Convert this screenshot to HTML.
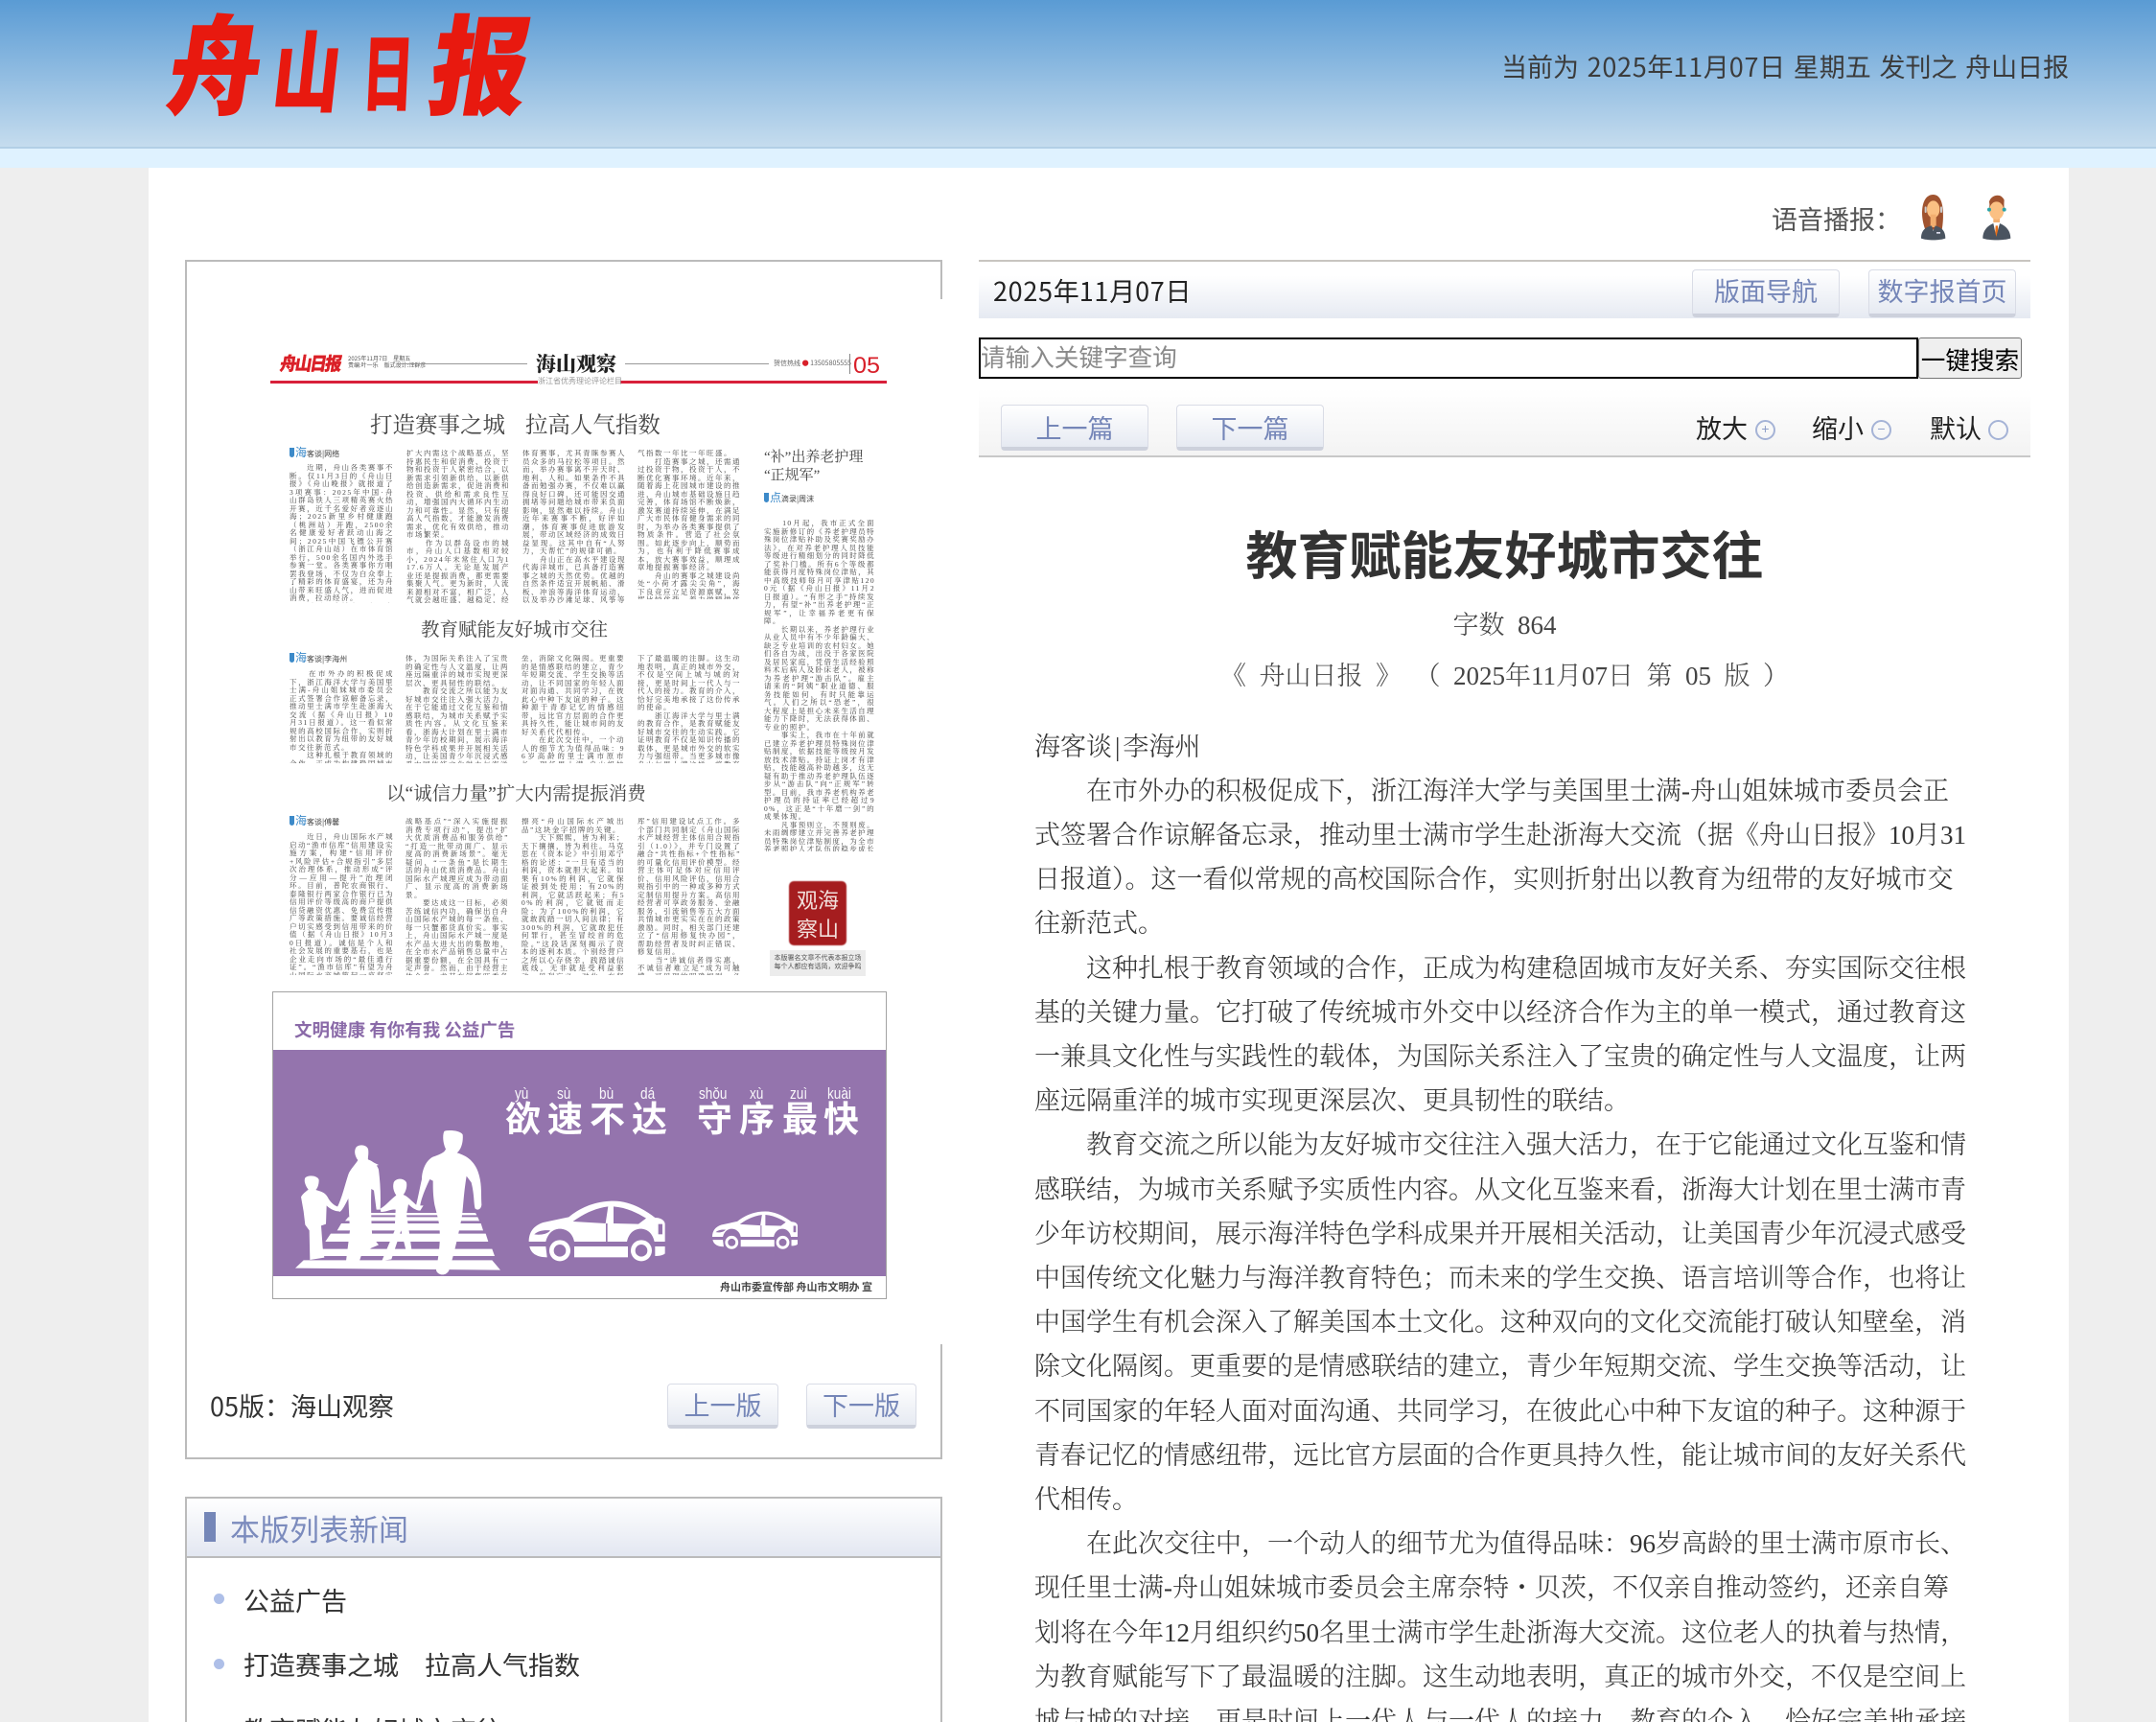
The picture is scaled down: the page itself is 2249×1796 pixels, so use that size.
<!DOCTYPE html>
<html lang="zh-CN"><head><meta charset="utf-8"><title>舟山日报</title>
<style>
html,body{margin:0;padding:0;width:2249px;height:1796px;overflow:hidden;background:#eee}
body{position:relative;font-family:"WenQuanYi Zen Hei","Noto Sans CJK SC",sans-serif;color:#333}
.a{position:absolute;white-space:nowrap}
.t{position:absolute;white-space:nowrap;font-size:27px;line-height:40px}
.d{letter-spacing:.7px}
.btn{position:absolute;box-sizing:border-box;background:linear-gradient(#fff,#e6eaf2);border:1px solid #d9dce6;border-bottom:4px solid #cdd1dc;border-radius:4px;color:#7586b8;font-size:27px;text-align:center}
.lg{position:absolute;color:#e8190f;font-family:"Noto Sans CJK SC",sans-serif;font-weight:900;line-height:1;transform-origin:0 0;-webkit-text-stroke:1px #e8190f}
.cir{position:absolute;box-sizing:border-box;width:21px;height:21px;border-radius:50%;border:2.5px solid #a5b3d6;color:#8f9fc8;font-size:14px;line-height:15px;text-align:center;font-family:"Liberation Sans",sans-serif}
.art{position:absolute;left:1079px;top:755.5px;font-family:"Liberation Serif","Noto Serif CJK SC",serif;font-weight:300;font-size:27px;line-height:46.2px;color:#333;white-space:nowrap}
.np{position:absolute;font-family:"Liberation Serif","Noto Serif CJK SC",serif;font-size:7.5px;line-height:8.5px;letter-spacing:1.5px;color:#444;overflow:hidden;text-align:justify;word-break:break-all;filter:blur(.3px)}
.nh{position:absolute;white-space:nowrap;font-family:"Liberation Serif","Noto Serif CJK SC",serif;color:#444;filter:blur(.3px)}
.by{position:absolute;font-size:8px;line-height:11px;color:#444;white-space:nowrap;filter:blur(.3px)}
.by b{color:#3c8ac9;font-size:12px;font-weight:400}
.by i{display:inline-block;width:5px;height:10px;background:#3c8ac9;border-radius:0 0 3px 3px;margin-right:1px;vertical-align:-1px}
.py{position:absolute;top:1132px;color:#fff;font:17px/18px "Liberation Sans",sans-serif;white-space:nowrap;transform:scaleX(.8);transform-origin:0 0;opacity:.95}
.ad{position:absolute;top:1142px;color:#fff;font-family:"WenQuanYi Zen Hei","Noto Sans CJK SC",sans-serif;font-weight:bold;font-size:37px;line-height:44px}
</style></head><body>

<div class="a" style="left:0;top:0;width:2249px;height:153px;background:linear-gradient(#5a9bd4,#c5dcee)"></div>
<div class="a" style="left:0;top:153px;width:2249px;height:2px;background:#b2cfe6"></div>
<div class="a" style="left:0;top:155px;width:2249px;height:20px;background:#dff2ff"></div>
<div class="a" style="left:155px;top:175px;width:2003px;height:1621px;background:#fff"></div>

<!-- logo -->
<span class="lg" style="left:187px;top:6px;font-size:112px;transform:scale(.86,1) skewX(-10deg)">舟</span>
<span class="lg" style="left:291px;top:25px;font-size:92px;transform:scale(.76,.98) skewX(-8deg)">山</span>
<span class="lg" style="left:380px;top:28px;font-size:90px;transform:scale(.6,.95) skewX(-4deg)">日</span>
<span class="lg" style="left:461px;top:6px;font-size:112px;transform:scale(.9,1) skewX(-10deg)">报</span>

<div class="t" style="left:1566px;top:49px;width:592px;color:#3b3b3b;word-spacing:2.6px">当前为 <span class="d">2025</span>年<span class="d">11</span>月<span class="d">07</span>日 星期五 发刊之 舟山日报</div>

<!-- voice -->
<div class="t" style="left:1848px;top:208px;color:#555">语音播报：</div>
<svg class="a" style="left:2000px;top:200px" width="100" height="54" viewBox="120 60 300 160">
<path d="M170 68C145 68 135 95 135 125C135 145 140 165 145 178L197 178C200 160 202 140 200 115C198 90 190 68 170 68Z" fill="#a0532f"/>
<ellipse cx="170" cy="114" rx="20" ry="27" fill="#fbc083"/><rect x="161" y="130" width="18" height="40" fill="#f2ae70"/>
<rect x="143" y="105" width="6" height="20" rx="3" fill="#ccc"/><rect x="192" y="105" width="6" height="20" rx="3" fill="#ccc"/>
<path d="M132 205C132 180 145 170 165 165L170 182L176 165C195 170 208 180 208 205C190 212 150 212 132 205Z" fill="#4a5460"/><rect x="180" y="185" width="12" height="5" fill="#dde"/>
<path d="M347 92C345 70 385 60 390 85L392 112L345 112Z" fill="#a0532f"/>
<rect x="358" y="135" width="20" height="30" fill="#f2ae70"/>
<ellipse cx="368" cy="118" rx="23" ry="28" fill="#fbc083"/><path d="M347 105C350 85 385 80 391 105L392 85C385 66 350 70 345 90Z" fill="#a0532f"/>
<circle cx="345" cy="115" r="6" fill="#2aa3a8"/><circle cx="392" cy="115" r="6" fill="#2aa3a8"/>
<path d="M358 155L378 155L385 200L352 200Z" fill="#fff"/><path d="M365 165L372 165L374 198L368 205L363 198Z" fill="#e8701a"/>
<path d="M325 205C325 180 340 165 358 158L367 200L378 158C396 165 412 180 412 205C390 212 345 212 325 205Z" fill="#4a5460"/>
</svg>

<!-- left box -->
<div class="a" style="left:193px;top:271px;width:789px;height:2px;background:#bbb"></div>
<div class="a" style="left:193px;top:271px;width:2px;height:1251px;background:#bbb"></div>
<div class="a" style="left:981px;top:271px;width:2px;height:41px;background:#bbb"></div>
<div class="a" style="left:981px;top:1402px;width:2px;height:120px;background:#bbb"></div>
<div class="a" style="left:193px;top:1520px;width:790px;height:2px;background:#bbb"></div>

<!-- newspaper masthead -->
<span class="lg" style="left:294px;top:369px;font-size:19px;letter-spacing:-2px;-webkit-text-stroke:.3px #e8190f;transform:scale(.92,1) skewX(-10deg);font-weight:900;white-space:nowrap;color:#d8202a">舟山日报</span>
<div class="a" style="left:363px;top:370px;font-size:6px;line-height:7px;color:#555;filter:blur(.3px)">2025年11月7日　星期五<br>责编:叶一乐　版式设计:汪群彦</div>
<div class="a" style="left:414px;top:379px;width:136px;height:1px;background:#999"></div>
<div class="a" style="left:652px;top:379px;width:150px;height:1px;background:#999"></div>
<div class="a" style="left:559px;top:365px;font:900 21px/28px 'Noto Serif CJK SC',serif;color:#222;filter:blur(.3px)">海山观察</div>
<div class="a" style="left:807px;top:375px;font-size:7px;line-height:9px;color:#666;filter:blur(.3px)">贺信热线 <span style="color:#d8202a">●</span> 13505805555</div>
<div class="a" style="left:886px;top:369px;width:1px;height:21px;background:#888"></div>
<div class="a" style="left:890px;top:367px;font:24px/30px 'Liberation Sans',sans-serif;color:#d8202a;transform:scaleX(1.05);transform-origin:0 0">05</div>
<div class="a" style="left:282px;top:397px;width:643px;height:3px;background:#d8203a"></div>
<div class="a" style="left:561px;top:392px;width:86px;height:12px;background:#fff;text-align:center;font-size:8px;line-height:12px;color:#999">浙江省优秀理论评论栏目</div>

<!-- newspaper headings -->
<div class="nh" style="left:386px;top:427px;font-size:23.5px;line-height:34px;word-spacing:15px">打造赛事之城 拉高人气指数</div>
<div class="nh" style="left:439px;top:644px;font-size:19.5px;line-height:28px">教育赋能友好城市交往</div>
<div class="nh" style="left:403px;top:815px;font-size:19.5px;line-height:28px">以“诚信力量”扩大内需提振消费</div>
<div class="nh" style="left:797px;top:468px;font-size:15px;line-height:19px">“补”出养老护理<br>“正规军”</div>

<div class="by" style="left:302px;top:466px"><i></i><b>海</b>客谈|网络</div>
<div class="by" style="left:302px;top:680px"><i></i><b>海</b>客谈|李海州</div>
<div class="by" style="left:302px;top:850px"><i></i><b>海</b>客谈|傅馨</div>
<div class="by" style="left:797px;top:513px"><i></i><b>点</b>滴录|周沫</div>

<div class="np" style="left:302px;top:484px;width:109px;height:145px">　　近期，舟山各类赛事不断。仅11月3日的《舟山日报》《舟山晚报》就报道了3项赛事：2025年中国·舟山群岛铁人三项精英赛火热开赛，近千名爱好者竞逐山海；2025新里乡村健康跑（桃洲站）开跑，2500余名健康爱好者跃动山海之间；2025中国飞镖公开赛（浙江舟山站）在市体育馆举行，500余名国内外选手参赛一堂。各类赛事你方唱罢我登场，不仅为白众奉上了精彩的体育盛宴，还为舟山带来旺盛人气，进而促进消费，拉动经济。<br>　　对于一座城市而言，人气指数往往反映其经济繁荣程度。产业兴，人气才能聚集；人气旺，消费才会活跃。党的二十届四中全会指出，提大国内市场是中国式现代化的战略抉择。坚持</div>
<div class="np" style="left:424px;top:469px;width:108px;height:160px">扩大内需这个战略基点，坚持惠民生和促消费、投资于物和投资于人紧密结合，以新需求引领新供给，以新供给创造新需求，促进消费和投资、供给和需求良性互动，增强国内大循环内生动力和可靠性。显然，只有提高人气指数，才能激发消费需求，优化有效供给，推动市场繁荣。<br>　　作为以群岛设市的城市，舟山人口基数相对较小，2024年末常住人口为117.6万人。无论是发展产业还是提振消费，都更需要集聚人气。更为新时，人流来源相对不富，相广泛，人气就会越旺盛，越稳定，经济发展也越有韧性。打造赛事之城，正是提高人气指数的有效途径。每场赛事都能带来不同程度的人流。赛事接连不断也能形成稳定流量，从而持续支撑消费持续升温。<br>　　正因如此，许多城市都积极举办</div>
<div class="np" style="left:545px;top:469px;width:108px;height:160px">体育赛事，尤其青睐参赛人员众多的马拉松等项目。然而，举办赛事离不开天时、地利、人和。如果条件不具备而勉强办赛，不仅难以赢得良好口碑，还可能因交通拥堵等问题给城市带来负面影响，显然难以持续。舟山近年来赛事不断，好评如潮，体育赛事促进旅游发展，带动区域经济的成效日益显现。这其中自有“人努力，天帮忙”的规律可循。<br>　　舟山正在高水平建设现代海洋城市，已具备打造赛事之城的天然优势。优越的自然条件适宜开展帆船、滑板、冲浪等海洋体育运动，以及举办沙滩足球、风筝等赛事，即便是马拉松、骑行等常规体育项目，也因滨海而颇具魅力。优美的滨海环境，精致的海岛风情，对参赛选手具有独特的吸引力。正因如此，海岛马拉松等品牌赛事的人</div>
<div class="np" style="left:665px;top:469px;width:108px;height:156px">气指数一年比一年旺盛。<br>　　打造赛事之城，还需通过投资于物，投资于人，不断优化赛事环境。近年来，随着海上花园城市建设的推进，舟山城市基础设施日趋完善，体育场馆不断焕新，激发赛道持续延伸，在满足广大市民体育健身需求的同时，为举办各类赛事提供了物质条件。营造了社会氛围。如此逐步向上，顺势而为，也有利于降低赛事成本，放大赛事效益，顺理成章地提振赛事经济。<br>　　舟山的赛事之城建设尚处“小荷才露尖尖角”，海下良竞应立足资源禀赋，发挥比较优势，着力做精做优海岛品牌赛事，推动群众体育与竞技体育良性互动，体育赛事与区域经济深度融合，开辟消费新场景，拓长体育产业链，使赛事汇聚的人气更好地转化为消费力、生产力。</div>

<div class="np" style="left:302px;top:699px;width:109px;height:97px">　　在市外办的积极促成下，浙江海洋大学与美国里士满-舟山姐妹城市委员会正式签署合作谅解备忘录，推动里士满市学生赴浙海大交流（据《舟山日报》10月31日报道）。这一看似常规的高校国际合作，实则折射出以教育为纽带的友好城市交往新范式。<br>　　这种扎根于教育领域的合作，正成为构建稳固城市友好关系、夯实国际交往根基的关键力量。它打破了传统城市外交中以经济合作为主的单一模式，通过教育这一兼具文化性与实践性的载</div>
<div class="np" style="left:423px;top:683px;width:108px;height:113px">体，为国际关系注入了宝贵的确定性与人文温度，让两座远隔重洋的城市实现更深层次、更具韧性的联结。<br>　　教育交流之所以能为友好城市交往注入强大活力，在于它能通过文化互鉴和情感联结，为城市关系赋予实质性内容。从文化互鉴来看，浙海大计划在里士满市青少年访校期间，展示海洋特色学科成果并开展相关活动，让美国青少年沉浸式感受中国传统文化魅力与海洋教育特色；而未来的学生交换、语言培训等合作，也将让中国学生有机会深入了解美国本土文化。这种双向的文化交流能打破认知壁</div>
<div class="np" style="left:544px;top:683px;width:108px;height:113px">垒，消除文化隔阂。更重要的是情感联结的建立，青少年短期交流、学生交换等活动，让不同国家的年轻人面对面沟通、共同学习，在彼此心中种下友谊的种子。这种源于青春记忆的情感纽带，远比官方层面的合作更具持久性，能让城市间的友好关系代代相传。<br>　　在此次交往中，一个动人的细节尤为值得品味：96岁高龄的里士满市原市长、现任里士满-舟山姐妹城市委员会主席奈特·贝茨，不仅亲自推动签约，还亲自筹划将在今年12月组织约50名里士满市学生赴浙海大交流。这位老人的执着与热情，为教育赋能写</div>
<div class="np" style="left:665px;top:683px;width:108px;height:113px">下了最温暖的注脚。这生动地表明，真正的城市外交，不仅是空间上城与城的对接，更是时间上一代人与一代人的接力。教育的介入，恰好完美地承接了这份传承的使命。<br>　　浙江海洋大学与里士满的教育合作，是教育赋能友好城市交往的生动实践。它证明教育不仅是知识传播的载体，更是城市外交的软实力与强纽带。当更多城市像舟山与里士满这样，将教育的活水引入友城交往的園地，我们就有理由相信，跨越国界的理解与友谊，必将在新一代青年中深深扎根、绵延不息。</div>

<div class="np" style="left:302px;top:869px;width:109px;height:148px">　　近日，舟山国际水产城启动“渔市信库”信用建设实施方案，构建“信用评价+风险评估+合规指引”多层次治理体系，推动形成“评分—应用—提升”治理闭环。目前，普陀农商银行、泰隆银行两家合作银行已为信用评价等级高的商户提供信贷融资优惠、免费宣传推广等政策措施。要诚信经营户切实感受到信用带来的价值（据《舟山日报》10月30日报道）。诚信是个人和社会发展的重要基石，也是企业走向市场的“最佳通行证”。“渔市信库”有望为舟山国际水产城筑起一座坚实的“诚信大厦”。<br>　　《中共中央关于制定国民经济和社会发展第十五个五年规划的建议》指出，强大国内市场是中国式现代化的战略依托，强调“坚持扩大内需这个</div>
<div class="np" style="left:423px;top:853px;width:108px;height:164px">战略基点”“深入实施提振消费专项行动”，提出“扩大优质消费品和服务供给”“打造一批带动面广、显示度高的消费新场景”。毫无疑问，“一条鱼”是长期生活的舟山优质消费品。舟山国际水产城理应成为带动面广、显示度高的消费新场景。<br>　　要达成这一目标，必须苦练诚信内功，确保出自舟山国际水产城的每一条鱼、每一只蟹都货真价实。事实上，舟山国际水产城一度是水产品大进大出的集散地，在全市水产品销售总量中占据重要份额，在全国具有一定声誉。然而，由于经营主体众多，尤其在销售旺季各路电商需求繁多，难免出现鱼龙混杂的现象。虽经多年整治，市场秩序持续好转，但依然存在以次充好等不诚信行为。不同程度地损害着水产城的诚信度和美誉度。</div>
<div class="np" style="left:544px;top:853px;width:108px;height:164px">擦亮“舟山国际水产城出品”这块金字招牌的关键。<br>　　天下熙熙，皆为利来；天下攘攘，皆为利往。马克思在《资本论》中引用邓宁格的论述：“一旦有适当的利润，资本就胆大起来。如果有10%的利润，它就保证被到处使用；有20%的利润，它就活跃起来；有50%的利润，它就铤而走险；为了100%的利润，它就敢践踏一切人间法律；有300%的利润，它就敢犯任何罪行，甚至冒绞首的危险。”这段话深刻揭示了资本的逐利本质。个别经营户之所以心存侥幸，践踏诚信底线，无非就是受利益驱动。见利忘义，对此，在坚持依法整治的同时，还应通过以富诸义与以利导义相结合，引导经营者自觉守法，向善而行。<br>　　今年，市市场监管管理局携手普陀分局联合舟山水产品中心批发市场有限公司，在舟山国际水产城开展“渔市信</div>
<div class="np" style="left:665px;top:853px;width:108px;height:164px">库”信用建设试点工作。多个部门共同制定《舟山国际水产城经营主体信用合规指引（1.0）》，并专门设置了融合“共性指标+个性指标”的可量化信用评价模型。经营主体可足体对应信用评价、信用风险评估，信用合规指引中的一种或多种方式定制信用提升方案。高信用经营者可享政务服务、金融服务、引流销售等五大方面共情城市更实实在在的政策激励。同时，相关部门还建立了“信用修复快办园”，帮助经营者及时纠正错误、修复信用。<br>　　当“讲诚信者得实惠，不诚信者难立足”成为可触摸、可见现的明确规则，必将引导广大经营者共同参与“渔市信库”建设。目前，国际水产城经营主体信用良好率已提升至94%，水产品销售也随之日益兴旺。以“诚信力量”扩大内需，提振消费，这一创新举措值得推广借鉴。</div>

<div class="np" style="left:797px;top:542px;width:116px;height:346px;letter-spacing:1.4px">　　10月起，我市正式全面实施新修订的《养老护理员特殊岗位津贴补助及奖赛奖励办法》，在对养老护理人员技能等级进行精细划分的同时降低了奖补门槛。所有6个等级都能获得月度特殊岗位津贴，其中高级技师每月可享津贴1200元（据《舟山日报》11月2日报道）。“有形之手”持续发力，有望“补”出养老护理“正规军”，让幸福养老更有保障。<br>　　长期以来，养老护理行业从业人员中有不少年龄偏大、缺乏专业培训的农村妇女。她们各自为战，出没于各家医院及居民家庭，凭借生活经验照料术后病人及卧床老人，被称为养老护理“游击队”。雇主请来的“阿姨”职业道德、服务技能如何，有时只能靠运气。人们之所以“恐老”，很大程度上是担心未来生活自理能力下降时，无法获得体面、专业的照护。<br>　　事实上，我市在十年前就已建立养老护理员特殊岗位津贴制度，依据技能等级按月发放技术津贴。持证上岗才有津贴，技能越高补助越多，这无疑有助于推动养老护理队伍逐步从“游击队”向“正规军”转型。目前，我市养老机构养老护理员的持证率已经超过90%，这正是“十年磨一剑”的成果体现。<br>　　凡事预则立，不预则废。未雨绸缪建立并完善养老护理员特殊岗位津贴制度，为全市养老照护人才队伍的稳步成长奠定了坚实基础，使全社会在面对日益增长的养老护理刚需时不至于手足无措。眼下，更有力度的养老护理员补助新政开始实施，必将进一步推动养老护理“正规军”向年轻化、专业化、职业化方向发展。<br>　　积极应对人口老龄化，除了“补”出一支养老护理“正规军”，还有许多工作要做。各方面应立足当下，放眼长远，系统谋划，统筹实施，以高质量的工作成果满足广大老年人日益增长的高品质养老服务需求。</div>

<!-- seal -->
<div class="a" style="left:823px;top:919px;width:60px;height:67px;background:#a51d1f;border-radius:5px;filter:blur(.4px)"></div>
<div class="a" style="left:825px;top:923px;width:56px;font:22px/30px 'Noto Sans CJK SC',sans-serif;color:#f2e0dc;text-align:center;white-space:normal;filter:blur(.3px)">观海<br>察山</div>
<div class="a" style="left:803px;top:991px;width:100px;height:27px;background:#ececec;text-align:center;font-size:7px;line-height:9px;padding-top:4px;box-sizing:border-box;color:#555;filter:blur(.3px)">本版署名文章不代表本报立场<br>每个人都应有话简，欢迎争鸣</div>

<!-- ad -->
<div class="a" style="left:284px;top:1034px;width:639px;height:319px;border:1.5px solid #a3a3a3;background:#fff"></div>
<div class="a" style="left:307px;top:1062px;font:bold 18.5px/24px 'WenQuanYi Zen Hei','Noto Sans CJK SC',sans-serif;color:#8a6aa8">文明健康 有你有我 公益广告</div>
<div class="a" style="left:285px;top:1095px;width:639px;height:236px;background:#9474ad"></div>
<div class="a" style="left:751px;top:1334px;font:bold 11px/16px 'Noto Sans CJK SC',sans-serif;color:#444">舟山市委宣传部 舟山市文明办 宣</div>
<span class="py" style="left:537px">yù</span><span class="py" style="left:581px">sù</span><span class="py" style="left:625px">bù</span><span class="py" style="left:668px">dá</span>
<span class="py" style="left:729px">shǒu</span><span class="py" style="left:782px">xù</span><span class="py" style="left:824px">zuì</span><span class="py" style="left:863px">kuài</span>
<span class="ad" style="left:527px">欲</span><span class="ad" style="left:571px">速</span><span class="ad" style="left:615px">不</span><span class="ad" style="left:659px">达</span>
<span class="ad" style="left:727px">守</span><span class="ad" style="left:771px">序</span><span class="ad" style="left:816px">最</span><span class="ad" style="left:859px">快</span>

<svg class="a" style="left:300px;top:1170px" width="430" height="170" viewBox="0 0 1290 510">
<defs><g id="car">
<path d="M755 375C755 345 770 325 800 315L880 298C915 270 960 248 1020 248C1080 248 1130 285 1150 300C1170 300 1181 310 1181 320L1181 375L1148 375C1142 348 1125 335 1105 335C1085 335 1068 348 1062 375L897 375C892 348 872 335 852 335C832 335 815 348 808 375Z" fill="#fff"/>
<path d="M893 312C930 285 965 270 1003 265L995 318Z" fill="#9474ad"/>
<path d="M1020 265C1060 268 1095 285 1122 302L1098 320L1020 318Z" fill="#9474ad"/>
<path d="M996 318L996 375L1001 375L1001 318Z" fill="#9474ad"/>
<rect x="1160" y="320" width="13" height="32" fill="#9474ad"/>
<path d="M772 352C785 340 805 338 822 340C812 352 790 355 772 352Z" fill="#9474ad"/>
<circle cx="852" cy="403" r="33" fill="#fff"/><circle cx="852" cy="403" r="19" fill="#9474ad"/>
<circle cx="1107" cy="403" r="33" fill="#fff"/><circle cx="1107" cy="403" r="19" fill="#9474ad"/>
<path d="M757 390L808 390L812 424C785 424 762 415 757 390Z" fill="#fff"/>
<rect x="897" y="390" width="168" height="34" fill="#fff"/>
<path d="M1150 390L1181 390L1181 412C1175 418 1160 420 1150 420Z" fill="#fff"/>
</g></defs>
<use href="#car"/>
<g fill="#fff">
<path d="M24 458L50 433L640 433L666 464Z"/>
<path d="M95 398L640 398L648 420L80 420Z"/>
<path d="M135 350L620 350L628 375L118 375Z"/>
<path d="M168 318L605 318L612 340L155 340Z"/>
<path d="M190 298L595 298L600 310L180 310Z"/>
<path d="M258 285L588 285L592 292L258 292Z"/>
<path d="M490 30C495 25 540 25 548 40C550 60 545 85 530 97C560 105 590 125 600 170C608 200 605 230 607 260C605 275 595 278 587 272C582 255 585 230 575 190L560 170C550 230 550 270 545 300C535 350 520 420 505 465C495 485 470 480 465 465C470 430 485 360 470 300L460 260C455 230 455 210 455 185L445 180C430 210 415 250 415 265L400 270C410 230 415 200 420 180C420 150 435 115 460 108C480 100 492 95 495 85C485 65 485 40 490 30Z"/>
<path d="M55 175C65 165 95 168 98 182C98 200 92 210 88 213C105 218 118 222 125 235C135 255 150 265 165 268L165 280C148 282 130 270 122 262L120 320L105 325L110 395L115 425L70 432L68 340L55 322L50 280L42 235C50 222 60 217 65 212C56 200 50 185 55 175Z"/>
<path d="M212 85C215 70 245 68 252 85C255 100 250 115 252 118C265 122 282 135 285 150C290 190 292 230 290 275L278 275L270 215L262 210C260 260 262 320 265 360L285 385L262 395L230 420L225 435L183 435L195 340L190 240C180 260 170 280 162 282L155 268C170 240 180 195 190 165C195 150 215 130 220 120C212 110 208 95 212 85Z"/>
<path d="M250 118L285 135L268 140Z"/>
<path d="M332 190C338 175 365 175 372 190C375 205 368 222 362 228C375 232 390 250 405 262L425 262L415 278C400 278 385 265 378 258L372 290L382 355L390 415L375 420L355 340L325 430L295 435L335 340L338 275C325 272 310 282 292 282L290 272C305 265 320 245 340 230C332 218 328 205 332 190Z"/>
</g>
</svg>
<svg class="a" style="left:743px;top:1263px" width="89" height="41" viewBox="755 248 426 192"><use href="#car"/></svg>

<!-- bottom of image box -->
<div class="t" style="left:219px;top:1446px;color:#333">05版：海山观察</div>
<div class="btn" style="left:696px;top:1443px;width:116px;height:47px;line-height:41px">上一版</div>
<div class="btn" style="left:841px;top:1443px;width:115px;height:47px;line-height:41px">下一版</div>

<!-- list -->
<div class="a" style="left:193px;top:1561px;width:790px;height:235px;box-sizing:border-box;border:2px solid #bbb;border-bottom:0"></div>
<div class="a" style="left:195px;top:1563px;width:786px;height:60px;background:linear-gradient(#fff,#e3e7f1);border-bottom:2px solid #bbb"></div>
<div class="a" style="left:213px;top:1577px;width:12px;height:31px;background:#7587b8"></div>
<div class="a" style="left:240px;top:1572px;font-size:31px;line-height:44px;color:#7b8bbd">本版列表新闻</div>
<div class="a" style="left:223px;top:1662px;width:11px;height:11px;border-radius:50%;background:#aebfe8"></div>
<div class="t" style="left:254px;top:1649px">公益广告</div>
<div class="a" style="left:223px;top:1730px;width:11px;height:11px;border-radius:50%;background:#aebfe8"></div>
<div class="t" style="left:254px;top:1716px">打造赛事之城　拉高人气指数</div>
<div class="a" style="left:223px;top:1798px;width:11px;height:11px;border-radius:50%;background:#aebfe8"></div>
<div class="t" style="left:254px;top:1784px">教育赋能友好城市交往</div>

<!-- right panel -->
<div class="a" style="left:1021px;top:271px;width:1097px;height:61px;background:linear-gradient(#fff 25%,#e6eaf2);border-top:2px solid #c8c5c0;box-sizing:border-box"></div>
<div class="t" style="left:1036px;top:283px;color:#222"><span class="d">2025</span>年<span class="d">11</span>月<span class="d">07</span>日</div>
<div class="btn" style="left:1765px;top:281px;width:154px;height:50px;line-height:42px">版面导航</div>
<div class="btn" style="left:1949px;top:281px;width:154px;height:50px;line-height:42px">数字报首页</div>
<div class="a" style="left:1021px;top:352px;width:980px;height:43px;box-sizing:border-box;border:2px solid #000;background:#fff;font-size:25.6px;line-height:36px;color:#8a8a8a;padding-left:0">请输入关键字查询</div>
<div class="a" style="left:2001px;top:352px;width:108px;height:43px;box-sizing:border-box;border:1px solid #767676;border-radius:3px;background:#efefef;font-size:25.6px;line-height:43px;color:#000;text-align:center">一键搜索</div>
<div class="a" style="left:1021px;top:405px;width:1097px;height:72px;background:linear-gradient(#fff,#f3f3f3);border-bottom:2px solid #c8c8c8;box-sizing:border-box"></div>
<div class="btn" style="left:1044px;top:422px;width:154px;height:48px;line-height:45px">上一篇</div>
<div class="btn" style="left:1227px;top:422px;width:154px;height:48px;line-height:45px">下一篇</div>
<div class="t" style="left:1769px;top:426px;color:#222">放大</div><div class="cir" style="left:1831px;top:438px">+</div>
<div class="t" style="left:1890px;top:426px;color:#222">缩小</div><div class="cir" style="left:1952px;top:438px">−</div>
<div class="t" style="left:2013px;top:426px;color:#222">默认</div><div class="cir" style="left:2074px;top:438px"></div>

<!-- article head -->
<div class="a" style="left:1021px;top:541px;width:1097px;text-align:center;font-size:54px;line-height:70px;font-weight:bold;color:#333">教育赋能友好城市交往</div>
<div class="a" style="left:1021px;top:632px;width:1097px;text-align:center;font:300 27px/40px 'Liberation Serif','Noto Serif CJK SC',serif;color:#444;word-spacing:6.75px">字数 864</div>
<div class="a" style="left:1021px;top:685px;width:1097px;text-align:center;font:300 27px/40px 'Liberation Serif','Noto Serif CJK SC',serif;color:#444;word-spacing:6.75px">《 舟山日报 》 （ 2025年11月07日 第 05 版 ）</div>

<div class="art">海客谈<span style="margin:0 3px">|</span>李海州<br>
　　在市外办的积极促成下，浙江海洋大学与美国里士满-舟山姐妹城市委员会正<br>
式签署合作谅解备忘录，推动里士满市学生赴浙海大交流（据《舟山日报》10月31<br>
日报道）。这一看似常规的高校国际合作，实则折射出以教育为纽带的友好城市交<br>
往新范式。<br>
　　这种扎根于教育领域的合作，正成为构建稳固城市友好关系、夯实国际交往根<br>
基的关键力量。它打破了传统城市外交中以经济合作为主的单一模式，通过教育这<br>
一兼具文化性与实践性的载体，为国际关系注入了宝贵的确定性与人文温度，让两<br>
座远隔重洋的城市实现更深层次、更具韧性的联结。<br>
　　教育交流之所以能为友好城市交往注入强大活力，在于它能通过文化互鉴和情<br>
感联结，为城市关系赋予实质性内容。从文化互鉴来看，浙海大计划在里士满市青<br>
少年访校期间，展示海洋特色学科成果并开展相关活动，让美国青少年沉浸式感受<br>
中国传统文化魅力与海洋教育特色；而未来的学生交换、语言培训等合作，也将让<br>
中国学生有机会深入了解美国本土文化。这种双向的文化交流能打破认知壁垒，消<br>
除文化隔阂。更重要的是情感联结的建立，青少年短期交流、学生交换等活动，让<br>
不同国家的年轻人面对面沟通、共同学习，在彼此心中种下友谊的种子。这种源于<br>
青春记忆的情感纽带，远比官方层面的合作更具持久性，能让城市间的友好关系代<br>
代相传。<br>
　　在此次交往中，一个动人的细节尤为值得品味：96岁高龄的里士满市原市长、<br>
现任里士满-舟山姐妹城市委员会主席奈特・贝茨，不仅亲自推动签约，还亲自筹<br>
划将在今年12月组织约50名里士满市学生赴浙海大交流。这位老人的执着与热情，<br>
为教育赋能写下了最温暖的注脚。这生动地表明，真正的城市外交，不仅是空间上<br>
城与城的对接，更是时间上一代人与一代人的接力。教育的介入，恰好完美地承接</div>

</body></html>
